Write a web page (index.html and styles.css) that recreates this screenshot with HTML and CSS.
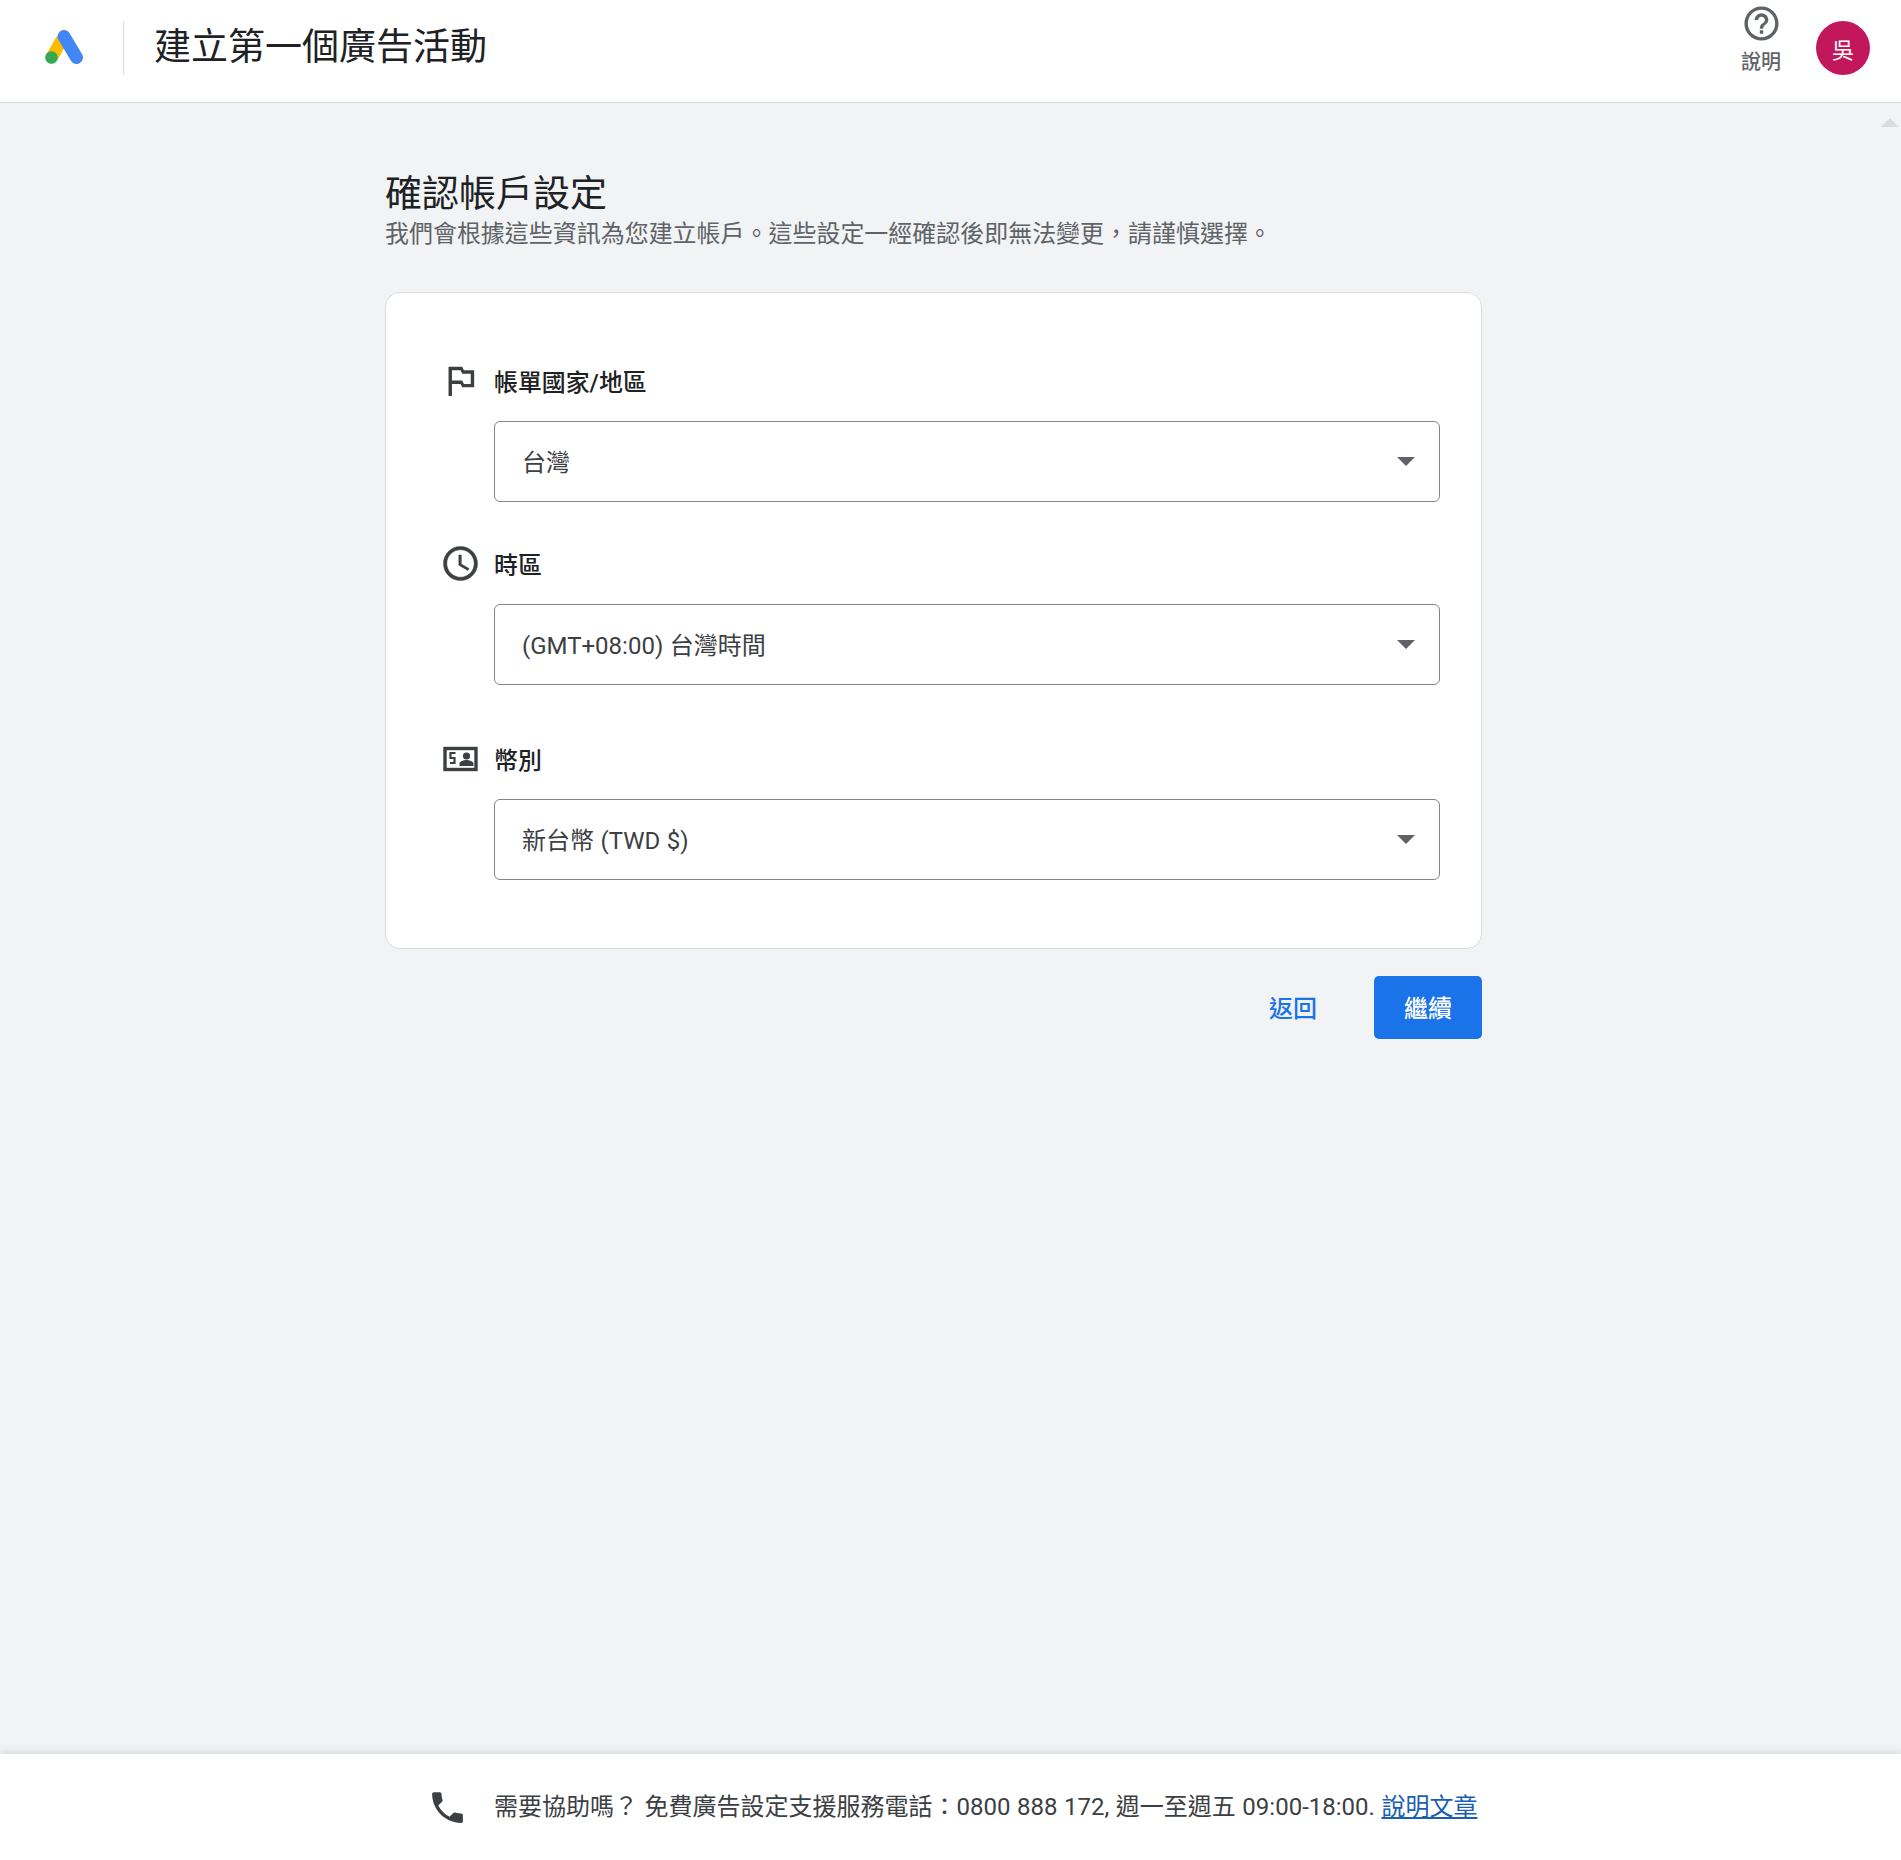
FILE: index.html
```html
<!DOCTYPE html>
<html lang="zh-Hant">
<head>
<meta charset="utf-8">
<title>建立第一個廣告活動</title>
<link rel="stylesheet" href="styles.css">
</head>
<body>
<div class="page">
  <header class="topbar">
    <div class="logo-cell">
      <svg class="logo" viewBox="0 0 38 34" aria-hidden="true">
        <path d="M7 27 L17 9.5" stroke="#fbbc04" stroke-width="12.5" stroke-linecap="butt" fill="none"/>
        <path d="M19 6.5 L31.5 27.5" stroke="#4285f4" stroke-width="13" stroke-linecap="round" fill="none"/>
        <circle cx="6.5" cy="27.5" r="6.3" fill="#34a853"/>
      </svg>
    </div>
    <div class="bar-divider"></div>
    <h1 class="bar-title">建立第一個廣告活動</h1>
    <div class="bar-spacer"></div>
    <div class="help">
      <svg class="icon-41" viewBox="0 0 24 24" aria-hidden="true"><path fill="#5f6368" d="M11 18h2v-2h-2v2zm1-16C6.48 2 2 6.48 2 12s4.48 10 10 10 10-4.48 10-10S17.52 2 12 2zm0 18c-4.41 0-8-3.59-8-8s3.59-8 8-8 8 3.59 8 8-3.59 8-8 8zm0-14c-2.21 0-4 1.79-4 4h2c0-1.1.9-2 2-2s2 .9 2 2c0 2-3 1.75-3 5h2c0-2.25 3-2.5 3-5 0-2.21-1.79-4-4-4z"/></svg>
      <span class="help-label">說明</span>
    </div>
    <div class="avatar">吳</div>
  </header>

  <div class="scroller">
    <main class="content">
      <h2 class="page-title">確認帳戶設定</h2>
      <p class="page-sub">我們會根據這些資訊為您建立帳戶。這些設定一經確認後即無法變更，請謹慎選擇。</p>

      <section class="card">
        <div class="field">
          <div class="field-label">
            <svg class="icon-41" viewBox="0 0 24 24" aria-hidden="true"><path fill="#3c4043" d="M14 6l-1-2H5v17h2v-7h5l1 2h7V6h-6zm4 8h-4l-1-2H7V6h5l1 2h5v6z"/></svg>
            <span>帳單國家/地區</span>
          </div>
          <div class="select"><span class="select-text">台灣</span><i class="caret"></i></div>
        </div>
        <div class="field field-second">
          <div class="field-label">
            <svg class="icon-41" viewBox="0 0 24 24" aria-hidden="true"><path fill="#3c4043" stroke="#3c4043" stroke-width=".25" d="M11.99 2C6.47 2 2 6.48 2 12s4.47 10 9.99 10C17.52 22 22 17.52 22 12S17.52 2 11.99 2zM12 20c-4.42 0-8-3.58-8-8s3.58-8 8-8 8 3.58 8 8-3.58 8-8 8zm.5-13H11v6l5.25 3.15.75-1.23-4.5-2.67z"/></svg>
            <span>時區</span>
          </div>
          <div class="select"><span class="select-text">(GMT+08:00) 台灣時間</span><i class="caret"></i></div>
        </div>
        <div class="field field-third">
          <div class="field-label">
            <svg class="icon-41" viewBox="0 -2 41 41" aria-hidden="true">
              <rect x="5" y="8.5" width="31" height="21" fill="none" stroke="#3c4043" stroke-width="3.4"/>
              <path fill="none" stroke="#3c4043" stroke-width="2.2" d="M15.5 13H10.5V18H14.5V23H10"/>
              <circle cx="26.5" cy="16" r="3.6" fill="#3c4043"/>
              <path fill="#3c4043" d="M19.5 26v-2.5c0-2.4 4.6-3.6 7-3.6s7 1.2 7 3.6V26z"/>
            </svg>
            <span>幣別</span>
          </div>
          <div class="select"><span class="select-text">新台幣 (TWD $)</span><i class="caret"></i></div>
        </div>
      </section>

      <div class="actions">
        <a class="btn-back">返回</a>
        <a class="btn-next">繼續</a>
      </div>
    </main>
    <i class="scroll-arrow"></i>
  </div>

  <footer class="foot">
    <svg class="icon-41" viewBox="0 0 24 24" aria-hidden="true"><path fill="#3c4043" d="M6.62 10.79c1.44 2.83 3.76 5.14 6.59 6.59l2.2-2.2c.27-.27.67-.36 1.02-.24 1.12.37 2.33.57 3.57.57.55 0 1 .45 1 1V20c0 .55-.45 1-1 1-9.39 0-17-7.61-17-17 0-.55.45-1 1-1h3.5c.55 0 1 .45 1 1 0 1.25.2 2.45.57 3.57.11.35.03.74-.25 1.02l-2.2 2.2z"/></svg>
    <p class="foot-text">需要協助嗎？ 免費廣告設定支援服務電話：0800 888 172, 週一至週五 09:00-18:00. <a class="foot-link">說明文章</a></p>
  </footer>
</div>
</body>
</html>
```
FILE: styles.css
```css
* { box-sizing: border-box; }
html, body { margin: 0; padding: 0; }
body {
  font-family: Roboto, "Noto Sans CJK TC", sans-serif;
  color: #202124;
  background: #f1f3f4;
}
.page { height: 1860px; display: flex; flex-direction: column; overflow: hidden; }

.topbar {
  height: 103px;
  flex: none;
  display: flex;
  align-items: flex-start;
  background: #fff;
  border-bottom: 1px solid #dadce0;
}
.logo-cell { width: 123px; padding: 30px 0 0 45px; flex: none; }
.logo { width: 38px; height: 34px; display: block; }
.bar-divider { width: 1px; height: 54px; margin-top: 21px; background: #dadce0; flex: none; }
.bar-title { margin: 25px 0 0 30px; font-size: 37px; line-height: 46px; font-weight: 400; }
.bar-spacer { flex: 1; }
.help { width: 70px; padding-top: 3px; margin-right: -1px; display: flex; flex-direction: column; align-items: center; flex: none; }
.icon-41 { width: 41px; height: 41px; display: block; flex: none; }
.help-label { font-size: 20px; line-height: 24px; font-weight: 500; color: #5f6368; margin-top: 6px; }
.avatar {
  width: 54px; height: 54px; border-radius: 50%;
  margin: 21px 31px 0 21px;
  background: #c2185b; color: #fff;
  display: flex; align-items: center; justify-content: center;
  font-size: 22px; flex: none;
}

.scroller { flex: 1; display: flex; justify-content: center; padding-right: 34px; position: relative; }
.scroll-arrow {
  position: absolute; right: 2px; top: 15px;
  border-left: 9px solid transparent; border-right: 9px solid transparent;
  border-bottom: 9px solid #dadce0;
}
.content { width: 1097px; padding-top: 70px; }
.page-title { margin: 0; font-size: 37px; line-height: 44px; font-weight: 400; }
.page-sub { margin: 0; font-size: 23.97px; line-height: 34px; color: #5f6368; }

.card {
  margin-top: 41px;
  height: 657px;
  background: #fff;
  border: 1px solid #dadce0;
  border-radius: 15px;
  padding: 67px 41px 0 54px;
}
.field-second { margin-top: 41px; }
.field-third { margin-top: 53px; }
.field-label {
  display: flex; align-items: center; gap: 13px;
  height: 41px;
  font-size: 23.9px; font-weight: 500; color: #202124;
}
.select {
  margin: 20px 0 0 54px;
  height: 81px;
  border: 1px solid #80868b;
  border-radius: 6px;
  padding: 0 24px 0 27px;
  display: flex; align-items: center; justify-content: space-between;
  font-size: 24px; word-spacing: .6px; color: #3c4043;
  background: #fff;
}
.select-text { padding-bottom: 3px; }
.caret {
  border-left: 9.5px solid transparent; border-right: 9.5px solid transparent;
  border-top: 9.5px solid #5f6368;
}
.actions { margin-top: 27px; display: flex; justify-content: flex-end; align-items: center; gap: 57px; }
.btn-back { font-size: 24px; font-weight: 500; color: #1a73e8; padding-bottom: 2px; }
.btn-next {
  width: 108px; height: 63px; border-radius: 5px;
  background: #1a73e8; color: #fff;
  display: flex; align-items: center; justify-content: center;
  font-size: 24px; font-weight: 500; padding-bottom: 2px;
}

.foot {
  height: 106px; flex: none;
  background: #fff;
  box-shadow: 0 -2px 8px rgba(60,64,67,.14);
  display: flex; align-items: center;
  padding: 0 0 0 427px;
  gap: 26px;
  position: relative;
}
.foot-text { margin: 0 0 6px; font-size: 24px; word-spacing: .6px; color: #3c4043; }
.foot-link { color: #1a5fb4; text-decoration: underline; }
```
